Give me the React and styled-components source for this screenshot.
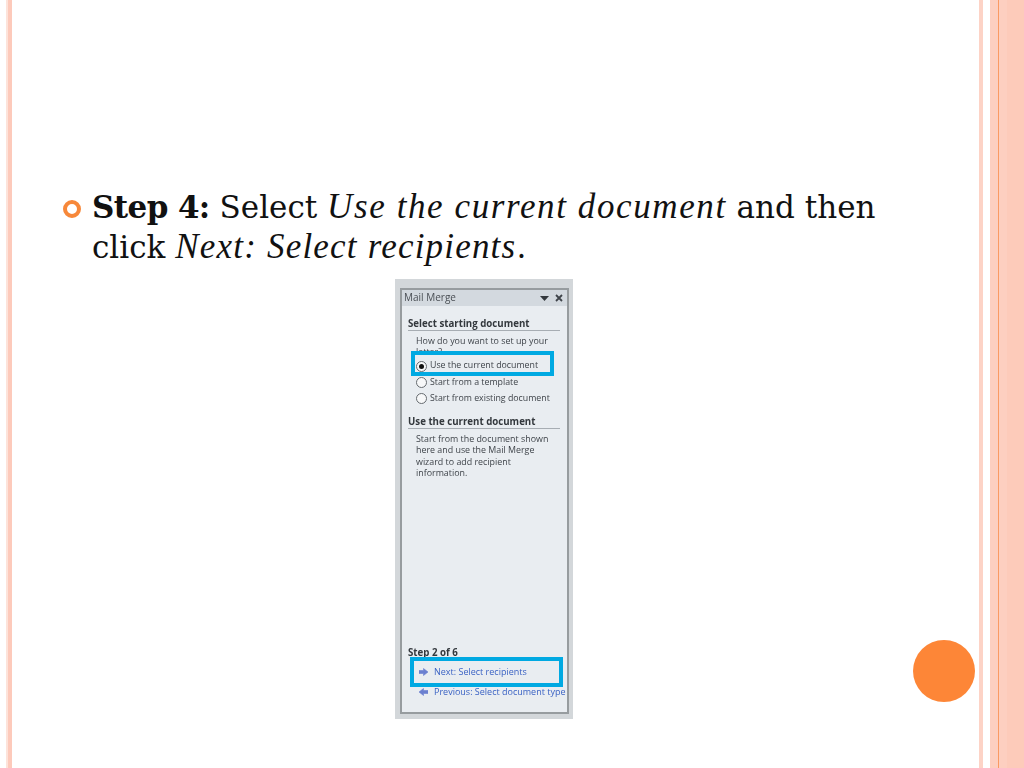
import React from "react"
import styled, { createGlobalStyle } from "styled-components"

const Global = createGlobalStyle`
    html, body {
        margin: 0;
        padding: 0;
        background: #fff;
    }
`;

const Slide = styled.div`
    position: relative;
    display: flex;
    width: 1024px;
    height: 768px;
    overflow: hidden;
    background: #fff;
`;

const LeftEdge = styled.div`
    flex: none;
    width: 6px;
    margin-left: 6px;
    border-left: 2px solid #fde3da;
    box-sizing: border-box;
    background: #fdcabb;
`;

const Main = styled.div`
    flex: 1;
    display: flex;
    flex-direction: column;
    padding-top: 187px;
    min-width: 0;
`;

const Bullet = styled.div`
    display: flex;
    margin-left: 51px;
    font-family: "DejaVu Serif", serif;
    font-size: 31px;
    line-height: 40px;
    color: #111;
`;

const Strong = styled.b`
    letter-spacing: -0.6px;
`;

const Em = styled.i`
    font-family: "Liberation Serif", serif;
    font-size: 35px;
    letter-spacing: ${(p) => p.$spread}px;
`;

const Dot = styled.span`
    flex: none;
    width: 18px;
    height: 18px;
    margin: 13px 11px 0 0;
    border: 4.5px solid #f7883a;
    border-radius: 50%;
    box-sizing: border-box;
`;

const Shot = styled.div`
    align-self: flex-start;
    display: flex;
    box-sizing: border-box;
    width: 178px;
    height: 440px;
    margin: 12px 0 0 383px;
    padding: 9px 4px 5px 5px;
    background: #d3d7da;
`;

const Pane = styled.div`
    flex: 1;
    display: flex;
    flex-direction: column;
    min-width: 0;
    border: 2px solid #979c9f;
    background: #e9edf1;
    font-family: "Open Sans", sans-serif;
    font-size: 8.9px;
    line-height: 11.3px;
    color: #3f444a;
    filter: blur(0.3px);
`;

const TitleBar = styled.div`
    display: flex;
    align-items: center;
    justify-content: space-between;
    height: 16px;
    padding: 0 4px 0 2px;
    background: #d3d9df;
    font-size: 10px;
    color: #4a4f55;
`;

const TitleIcons = styled.div`
    display: flex;
    align-items: center;
    gap: 6px;
`;

const Body = styled.div`
    flex: 1;
    display: flex;
    flex-direction: column;
    padding: 11px 0 0 6px;
    min-height: 0;
`;

const Heading = styled.div`
    box-sizing: border-box;
    width: 152px;
    height: 14px;
    padding-top: 1px;
    border-bottom: 1px solid #a7adb3;
    font-size: 9.7px;
    font-weight: 700;
    color: #33383d;
`;

const Para = styled.div`
    width: 136px;
    margin: 4px 0 0 8px;
    overflow: hidden;
    height: ${(p) => p.$height || "auto"};
`;

const Options = styled.div`
    display: flex;
    flex-direction: column;
    gap: 3px;
    margin: 2px 0 0 8px;
`;

const Option = styled.div`
    display: flex;
    align-items: center;
    gap: 3px;
    height: 13px;
    white-space: nowrap;
    font-size: 8.8px;
`;

const Radio = styled.span`
    flex: none;
    display: flex;
    align-items: center;
    justify-content: center;
    box-sizing: border-box;
    width: 11px;
    height: 11px;
    border: 1px solid #666b70;
    border-radius: 50%;
    background: #f7f8f9;

    &::after {
        content: "";
        display: ${(p) => (p.$on ? "block" : "none")};
        width: 5px;
        height: 5px;
        border-radius: 50%;
        background: #111;
    }
`;

const Marked = styled.div`
    position: relative;
    z-index: 1;
    box-sizing: border-box;
    display: flex;
    align-items: center;
    width: 143px;
    height: 25px;
    margin: -6px 0 -2px 3px;
    padding: 5px 0 0 1px;
    border: 4px solid #00a9e2;
    background: #e9edf1;
`;

const Section = styled.div`
    margin-top: 10px;
`;

const Spacer = styled.div`
    flex: 1;
`;

const Footer = styled.div`
    display: flex;
    flex-direction: column;
    padding-bottom: 13px;
`;

const StepLabel = styled.div`
    font-size: 9.7px;
    font-weight: 700;
    color: #33383d;
    margin-bottom: -1px;
`;

const LinkRow = styled.div`
    box-sizing: border-box;
    display: flex;
    align-items: center;
    gap: 6px;
    color: #3a62c4;
    font-size: 9px;
    white-space: nowrap;
    height: ${(p) => (p.$marked ? 30 : 15)}px;
    width: ${(p) => (p.$marked ? "153px" : "auto")};
    margin-left: ${(p) => (p.$marked ? 2 : 11)}px;
    margin-top: ${(p) => (p.$marked ? 0 : -3)}px;
    padding-left: ${(p) => (p.$marked ? 5 : 0)}px;
    border: ${(p) => (p.$marked ? "4px solid #00a9e2" : "none")};
`;

const RightEdge = styled.div`
    flex: none;
    display: flex;
    width: 45px;
`;

const Stripe = styled.div`
    flex: none;
    width: ${(p) => p.$w}px;
    background: ${(p) => p.$c};
`;

const Circle = styled.div`
    position: absolute;
    left: 913px;
    top: 640px;
    width: 62px;
    height: 62px;
    border-radius: 50%;
    background: #fd8637;
`;

const Arrow = ({ flip }) => (
    <svg width="9" height="8" viewBox="0 0 9 8" style={{ flex: "none", transform: flip ? "scaleX(-1)" : "none" }}>
        <path d="M0 2.5h4.5V0.5L9 4 4.5 7.5V5.5H0z" fill="#6a7fd0" stroke="#6a7fd0" strokeWidth="0.6" strokeLinejoin="round" />
    </svg>
);

const App = () => {
    return (
        <Slide>
            <Global />
            <LeftEdge />
            <Main>
                <Bullet>
                    <Dot />
                    <div>
                        <Strong>Step 4:</Strong> Select <Em $spread={1.6}>Use the current document</Em> and then
                        <br />
                        click <Em $spread={1.2}>Next: Select recipients</Em>.
                    </div>
                </Bullet>
                <Shot>
                    <Pane>
                        <TitleBar>
                            Mail Merge
                            <TitleIcons>
                                <svg width="9" height="5" viewBox="0 0 9 5">
                                    <path d="M0 0h9L4.5 5z" fill="#33383d" />
                                </svg>
                                <svg width="8" height="8" viewBox="0 0 8 8">
                                    <path d="M1 1l6 6M7 1L1 7" stroke="#3f444a" strokeWidth="1.8" />
                                </svg>
                            </TitleIcons>
                        </TitleBar>
                        <Body>
                            <Heading>Select starting document</Heading>
                            <Para $height="22px">How do you want to set up your letter?</Para>
                            <Marked>
                                <Option>
                                    <Radio $on />
                                    Use the current document
                                </Option>
                            </Marked>
                            <Options>
                                <Option>
                                    <Radio />
                                    Start from a template
                                </Option>
                                <Option>
                                    <Radio />
                                    Start from existing document
                                </Option>
                            </Options>
                            <Section>
                                <Heading>Use the current document</Heading>
                                <Para>
                                    Start from the document shown here and use the Mail Merge wizard to add recipient information.
                                </Para>
                            </Section>
                            <Spacer />
                            <Footer>
                                <StepLabel>Step 2 of 6</StepLabel>
                                <LinkRow $marked>
                                    <Arrow />
                                    Next: Select recipients
                                </LinkRow>
                                <LinkRow>
                                    <Arrow flip />
                                    Previous: Select document type
                                </LinkRow>
                            </Footer>
                        </Body>
                    </Pane>
                </Shot>
            </Main>
            <RightEdge>
                <Stripe $w={4} $c="#fdd3c6" />
                <Stripe $w={7} $c="#fff" />
                <Stripe $w={8} $c="#fdcfc0" />
                <Stripe $w={1} $c="#fa9a63" />
                <Stripe $w={8} $c="#fdcfc0" />
                <Stripe $w={17} $c="#fdcbba" />
            </RightEdge>
            <Circle />
        </Slide>
    )
}

export default App;
